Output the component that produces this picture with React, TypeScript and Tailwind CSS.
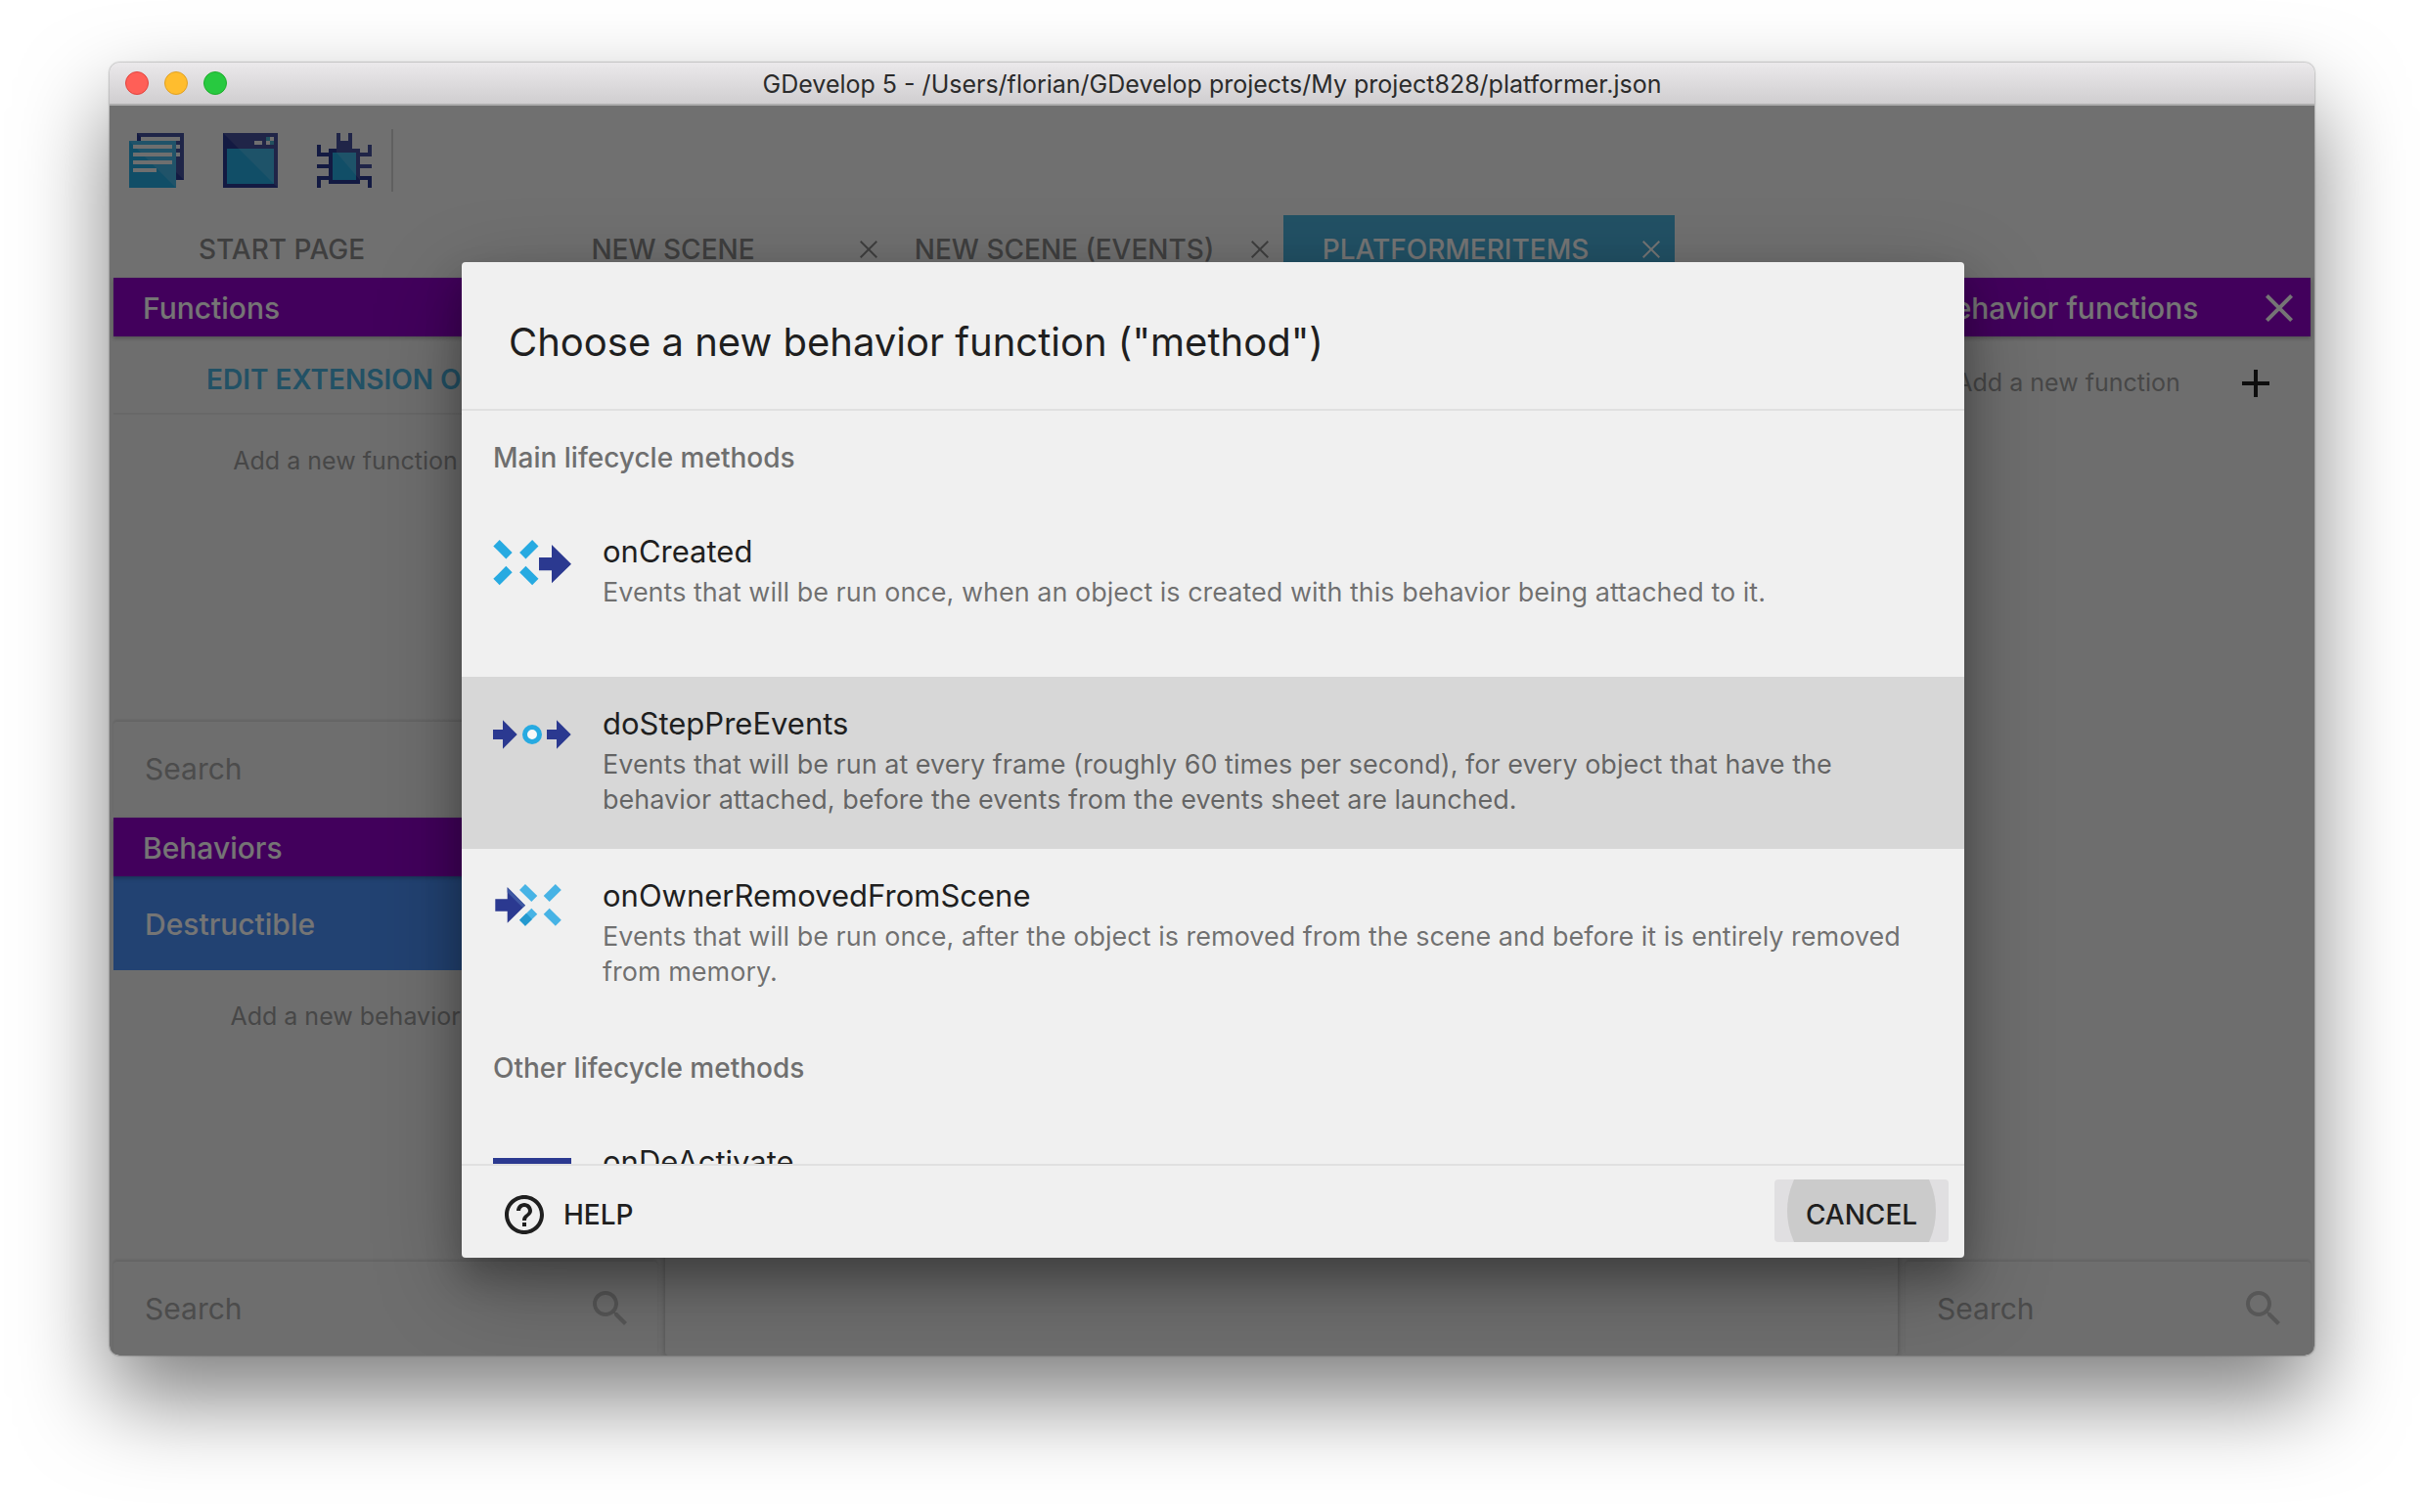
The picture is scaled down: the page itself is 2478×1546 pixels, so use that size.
import React from "react";

const NAVY = "#2b3990";
const SKY = "#27aae1";

function SceneListIcon() {
  return (
    <svg viewBox="0 0 14 14" className="size-14" aria-hidden="true">
      <path d="M2 0h12v12H2z" fill={NAVY} />
      <path d="M2 0h12v12z" fill="#fff" fillOpacity=".12" />
      <path d="M3 1h10v1H3zM12 3h1v1h-1zM12 5h1v1h-1z" fill="#f1f1f1" />
      <path d="M0 2h12v12H0z" fill={SKY} />
      <path d="M0 2h12v12z" fill="#fff" fillOpacity=".15" />
      <path d="M1 3h10v1H1zM1 5h10v1H1zM1 7h10v1H1zM1 9h6v1H1z" fill="#f1f1f1" />
    </svg>
  );
}

function PreviewIcon() {
  return (
    <svg viewBox="0 0 14 14" className="size-14" aria-hidden="true">
      <path d="M0 0h14v14H0z" fill={NAVY} />
      <path d="M1 4h12v9H1z" fill={SKY} />
      <path d="M0 0h14v14z" fill="#fff" fillOpacity=".13" />
      <path d="M8 2h2v1H8zM12 1h1v1h-1zM11 2h1v1h-1z" fill="#f1f1f1" />
      <path d="M11 1h1v1h-1zM12 2h1v1h-1z" fill="#4ab0d0" />
    </svg>
  );
}

function DebugIcon() {
  return (
    <svg viewBox="0 0 14 14" className="size-14" aria-hidden="true">
      <path
        d="M5 0h1v2h2V0h1v4h2v1h2V3h1v3h-3v2h3v1h-3v2h3v3h-1v-2h-2v1H3v-1H1v2H0v-3h3V9H0V8h3V6H0V3h1v2h2V4h2z"
        fill={NAVY}
      />
      <path d="M4 5h6v7H4z" fill={SKY} />
      <path d="M5 0h1v2h2V0h1v4h2v1h2V3h1v3h-3v2h3v1h-3v3L5 5z" fill="#fff" fillOpacity=".13" />
    </svg>
  );
}

function CreatedIcon() {
  return (
    <svg viewBox="0 0 80 80" className="size-20" aria-hidden="true">
      <path d="M3.5 19.2l13 13M43.3 19.2l-13 13M3.5 59l13-13M43.3 59l-13-13" stroke={SKY} strokeWidth="9" />
      <path d="M47 34h13V21l20 19.7L60 60.3v-13H47z" fill={NAVY} />
    </svg>
  );
}

function StepIcon() {
  return (
    <svg viewBox="0 0 80 80" className="size-20" aria-hidden="true">
      <path d="M0 34h10v-9.7L24.7 39 10 53.7V44H0zM55 34h10v-9.7L79.7 39 65 53.7V44H55z" fill={NAVY} />
      <circle cx="40" cy="39" r="7.5" fill="#f8f8f8" stroke={SKY} strokeWidth="5" />
    </svg>
  );
}

function RemovedIcon() {
  return (
    <svg viewBox="0 0 80 80" className="size-20" aria-hidden="true">
      <path d="M30 19l12.3 12M66.8 19L54.7 31M30 55.7l12.3-12M66.8 55.7l-12.1-12" stroke="#47b3e5" strokeWidth="8.5" />
      <path d="M30 55.7l7-6.8" stroke="#2499cf" strokeWidth="8.5" />
      <path d="M2.3 31.3h12.4v-12L33 37.7l-18.3 18v-12H2.3z" fill={NAVY} />
      <path d="M14.7 19.3L33 37.7l-2.6 2.4-15.7-15.7z" fill="#3f58a3" />
    </svg>
  );
}

function DeactivateIcon() {
  return (
    <svg viewBox="0 0 80 80" className="size-20" aria-hidden="true">
      <path d="M0 24h80v40H0z" fill={NAVY} />
    </svg>
  );
}

function CloseIcon({ className }: { className: string }) {
  return (
    <svg viewBox="0 0 28 28" className={className} fill="none" stroke="currentColor" strokeWidth="4" aria-hidden="true">
      <path d="M1.4 1.4l25.2 25.2M26.6 1.4L1.4 26.6" />
    </svg>
  );
}

function TabCloseIcon() {
  return (
    <svg viewBox="0 0 18 18" className="size-[18px]" fill="none" stroke="currentColor" strokeWidth="2" aria-hidden="true">
      <path d="M.7.7l16.6 16.6M17.3.7L.7 17.3" />
    </svg>
  );
}

function SearchIcon() {
  return (
    <svg viewBox="0 0 24 24" className="size-12 text-[#bdbdbd]" fill="currentColor" aria-hidden="true">
      <path d="M15.5 14h-.79l-.28-.27C15.41 12.59 16 11.11 16 9.5 16 5.91 13.09 3 9.5 3S3 5.91 3 9.5 5.91 16 9.5 16c1.61 0 3.09-.59 4.23-1.57l.27.28v.79l5 4.99L20.49 19l-4.99-5zm-6 0C7.01 14 5 11.99 5 9.5S7.01 5 9.5 5 14 7.01 14 9.5 11.99 14 9.5 14z" />
    </svg>
  );
}

function HelpIcon() {
  return (
    <svg viewBox="0 0 24 24" className="size-12" fill="currentColor" aria-hidden="true">
      <path d="M11 18h2v-2h-2v2zm1-16C6.48 2 2 6.48 2 12s4.48 10 10 10 10-4.48 10-10S17.52 2 12 2zm0 18c-4.41 0-8-3.59-8-8s3.59-8 8-8 8 3.59 8 8-3.59 8-8 8zm0-14c-2.21 0-4 1.79-4 4h2c0-1.1.9-2 2-2s2 .9 2 2c0 2-3 1.75-3 5h2c0-2.25 3-2.5 3-5 0-2.21-1.79-4-4-4z" />
    </svg>
  );
}

function PanelHeader({ title, closable }: { title: string; closable?: boolean }) {
  return (
    <header className="relative flex h-[60px] shrink-0 items-center justify-between bg-[#9100c8] pt-0.5 pr-[18px] pl-[30px] text-white shadow-[0_2px_4px_rgba(0,0,0,0.25)]">
      <h2 className="text-[30px] font-medium whitespace-nowrap">{title}</h2>
      {closable && (
        <button type="button" aria-label={`Close ${title}`}>
          <CloseIcon className="size-7" />
        </button>
      )}
    </header>
  );
}

function SearchBar({ label }: { label: string }) {
  return (
    <label className="flex h-24 shrink-0 items-center rounded-sm bg-[#f0f0f0] pr-6 pl-8 shadow-[0_-2px_3px_rgba(0,0,0,0.1)]">
      <input
        type="search"
        aria-label={label}
        placeholder="Search"
        className="h-12 min-w-0 flex-1 bg-transparent text-[30px] text-black outline-none placeholder:text-[#a6a6a6]"
      />
      <SearchIcon />
    </label>
  );
}

function AddRow({ label }: { label: string }) {
  return (
    <button type="button" className="flex h-24 w-full shrink-0 items-center pr-[42px]">
      <span className="flex-1 pr-3 text-center text-[25px] whitespace-nowrap text-[#9c9c9c]">{label}</span>
      <svg viewBox="0 0 28 28" className="size-7" fill="none" stroke="#202020" strokeWidth="4" aria-hidden="true">
        <path d="M14 0v28M0 14h28" />
      </svg>
    </button>
  );
}

const tabs = [
  { label: "START PAGE", closable: false, active: false },
  { label: "NEW SCENE", closable: true, active: false },
  { label: "NEW SCENE (EVENTS)", closable: true, active: false },
  { label: "PLATFORMERITEMS", closable: true, active: true },
];

function Tabs() {
  return (
    <nav className="flex h-16 shrink-0">
      {tabs.map((tab) => (
        <div
          key={tab.label}
          className={`flex w-[400px] items-center pt-1.5 ${tab.active ? "bg-[#4ab0dc] text-white" : "text-[#8a8a8a]"}`}
        >
          <button type="button" className="flex-1 text-center text-[28px] font-medium whitespace-nowrap">
            {tab.label}
          </button>
          <span className="flex w-12 justify-center">
            {tab.closable && (
              <button type="button" aria-label={`Close ${tab.label}`}>
                <TabCloseIcon />
              </button>
            )}
          </span>
        </div>
      ))}
    </nav>
  );
}

function Editor() {
  return (
    <div className="flex flex-1 flex-col">
      <div className="flex h-28 shrink-0 items-center gap-10 px-5">
        <button type="button" aria-label="Project manager"><SceneListIcon /></button>
        <button type="button" aria-label="Preview"><PreviewIcon /></button>
        <button type="button" aria-label="Debugger"><DebugIcon /></button>
        <span className="-ml-5 h-16 w-0.5 bg-[#d2d2d2]" />
      </div>
      <Tabs />
      <div className="flex flex-1 gap-2 bg-[#f0f0f0] px-1">
        <section className="flex w-[556px] shrink-0 flex-col">
          <div className="flex flex-1 flex-col pb-0.5">
            <PanelHeader title="Functions" />
            <button
              type="button"
              className="h-20 shrink-0 border-b-2 border-[#e2e2e2] pt-2.5 text-[28px] font-semibold whitespace-nowrap text-[#4ab0dc]"
            >
              EDIT EXTENSION OPTIONS
            </button>
            <AddRow label="Add a new function" />
            <div className="flex-1" />
            <SearchBar label="Search functions" />
          </div>
          <div className="flex flex-1 flex-col">
            <PanelHeader title="Behaviors" />
            <button
              type="button"
              className="h-24 shrink-0 bg-[#4a90f8] px-8 pt-0.5 text-left text-[30px] font-medium text-white"
            >
              Destructible
            </button>
            <AddRow label="Add a new behavior" />
            <div className="flex-1" />
            <SearchBar label="Search behaviors" />
          </div>
        </section>
        <section className="flex-1 rounded bg-[#f0f0f0] shadow-[0_0_6px_rgba(0,0,0,0.3)]" />
        <section className="flex w-[414px] shrink-0 flex-col">
          <PanelHeader title="Behavior functions" closable />
          <AddRow label="Add a new function" />
          <div className="flex-1" />
          <SearchBar label="Search behavior functions" />
        </section>
      </div>
    </div>
  );
}

type Method = { name: string; description: string; icon: React.ReactNode; selected?: boolean };

const mainMethods: Method[] = [
  {
    name: "onCreated",
    description: "Events that will be run once, when an object is created with this behavior being attached to it.",
    icon: <CreatedIcon />,
  },
  {
    name: "doStepPreEvents",
    description:
      "Events that will be run at every frame (roughly 60 times per second), for every object that have the behavior attached, before the events from the events sheet are launched.",
    icon: <StepIcon />,
    selected: true,
  },
  {
    name: "onOwnerRemovedFromScene",
    description:
      "Events that will be run once, after the object is removed from the scene and before it is entirely removed from memory.",
    icon: <RemovedIcon />,
  },
];

const otherMethods: Method[] = [
  {
    name: "onDeActivate",
    description: "Events that will be run once, after the behavior is de-activated on an object.",
    icon: <DeactivateIcon />,
  },
];

function MethodList({ title, methods }: { title: string; methods: Method[] }) {
  return (
    <section>
      <h3 className="flex h-24 items-center px-8 text-[28px] font-medium text-[#6f6f6f]">{title}</h3>
      <ul>
        {methods.map((method) => (
          <li key={method.name}>
            <button
              type="button"
              className={`flex h-44 w-full items-start gap-8 px-8 text-left ${method.selected ? "bg-[#d7d7d7]" : ""}`}
            >
              <span className="shrink-0 pt-5">{method.icon}</span>
              <span className="min-w-0 flex-1 pt-8">
                <span className="block text-[31px] leading-8 text-[#1f1f1f]">{method.name}</span>
                <span className="mt-2 block text-[27px] leading-9 text-black/55">{method.description}</span>
              </span>
            </button>
          </li>
        ))}
      </ul>
    </section>
  );
}

function MethodDialog() {
  return (
    <div
      role="dialog"
      aria-modal="true"
      aria-labelledby="dialog-title"
      className="flex w-full max-w-[1536px] flex-col overflow-hidden rounded bg-[#f0f0f0] shadow-[0_28px_90px_rgba(0,0,0,0.28),0_20px_36px_rgba(0,0,0,0.24)]"
    >
      <h1
        id="dialog-title"
        className="shrink-0 border-b-2 border-[#e0e0e0] px-12 pt-[50px] pb-9 text-[40px] leading-[64px] text-[#1f1f1f]"
      >
        Choose a new behavior function ("method")
      </h1>
      <div className="h-0 flex-1 overflow-hidden">
        <MethodList title="Main lifecycle methods" methods={mainMethods} />
        <MethodList title="Other lifecycle methods" methods={otherMethods} />
      </div>
      <footer className="flex shrink-0 items-center justify-between border-t-2 border-[#e0e0e0] pt-[13px] pb-[15px] pr-4 pl-10 text-[28px] font-medium text-[#1f1f1f]">
        <button type="button" className="flex h-[66px] items-center gap-4 pt-2">
          <HelpIcon />
          HELP
        </button>
        <button type="button" className="relative h-16 w-[178px] overflow-hidden rounded bg-[#e0dfe1]">
          <span className="absolute top-1/2 left-1/2 size-[152px] -translate-1/2 rounded-full bg-[#cbcbcb]" />
          <span className="relative block pt-2">CANCEL</span>
        </button>
      </footer>
    </div>
  );
}

export default function App() {
  return (
    <div className="flex min-h-screen flex-col bg-white px-28 pt-16 pb-40 font-['Inter','Liberation_Sans',sans-serif]">
      <main className="flex flex-1 flex-col overflow-hidden rounded-[10px] bg-[#f5f5f5] shadow-[0_0_2px_rgba(0,0,0,0.6),0_44px_90px_rgba(0,0,0,0.5)]">
        <header className="relative flex h-11 shrink-0 items-center justify-center border-b-2 border-[#adadad] bg-linear-to-b from-[#ebe9eb] to-[#d0ced0]">
          <div className="absolute left-4 flex gap-4">
            <button type="button" aria-label="Close window" className="size-6 rounded-full border border-[#e0443e] bg-[#ff5f57]" />
            <button type="button" aria-label="Minimize window" className="size-6 rounded-full border border-[#dfa023] bg-[#ffbd2e]" />
            <button type="button" aria-label="Zoom window" className="size-6 rounded-full border border-[#1dad2b] bg-[#28c940]" />
          </div>
          <p className="pt-1 text-[25px] text-[#2b2b2b]">GDevelop 5 - /Users/florian/GDevelop projects/My project828/platformer.json</p>
        </header>
        <div className="relative flex flex-1 flex-col">
          <Editor />
          <div className="absolute inset-0 flex justify-center bg-black/54 pt-40 pr-12 pb-[100px] pl-[50px]">
            <MethodDialog />
          </div>
        </div>
      </main>
    </div>
  );
}
